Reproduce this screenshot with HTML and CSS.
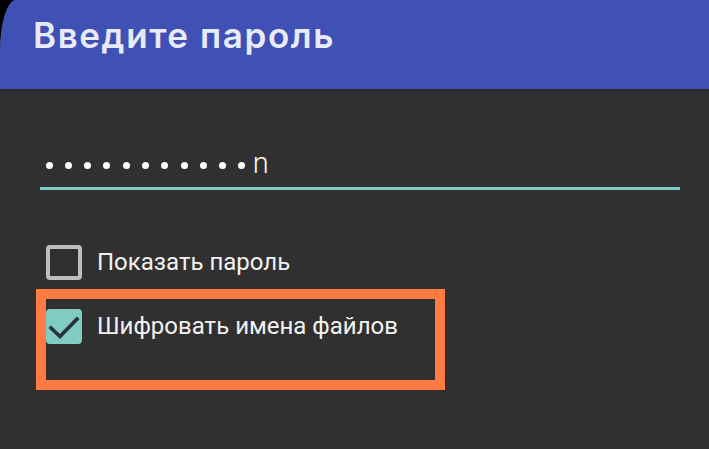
FILE: index.html
```html
<!DOCTYPE html>
<html lang="ru">
<head>
<meta charset="utf-8">
<title>Введите пароль</title>
<link rel="stylesheet" href="styles.css">
</head>
<body>
<div class="dialog">
  <header class="title-bar">
    <h1 class="title">Введите пароль</h1>
  </header>
  <div class="divider"></div>
  <main class="content">
    <div class="field">
      <span class="dot"></span><span class="dot"></span><span class="dot"></span><span class="dot"></span><span class="dot"></span><span class="dot"></span><span class="dot"></span><span class="dot"></span><span class="dot"></span><span class="dot"></span><span class="dot"></span><span class="last-char">n</span>
    </div>
    <div class="options">
      <label class="option">
        <span class="box"></span>
        <span class="label">Показать пароль</span>
      </label>
      <label class="option">
        <span class="box checked">
          <svg viewBox="0 0 36 36" width="36" height="36" class="check"><path d="M5 19 L14 27.5 L31 10" fill="none" stroke="#263238" stroke-width="3.6" stroke-linecap="square" stroke-linejoin="miter"/></svg>
        </span>
        <span class="label">Шифровать имена файлов</span>
      </label>
    </div>
  </main>
  <div class="highlight"></div>
</div>
</body>
</html>
```

FILE: styles.css
```css
html, body {
  margin: 0;
  padding: 0;
  background: #000;
}
body {
  width: 709px;
  height: 449px;
  overflow: hidden;
  font-family: Roboto, "Noto Sans", "Liberation Sans", sans-serif;
}
.dialog {
  position: relative;
  width: 709px;
  height: 449px;
  background: #303030;
  border-top-left-radius: 16px 52px;
  overflow: hidden;
}
.title-bar {
  height: 89px;
  background: #3f51b5;
  padding: 15px 0 0 33px;
  box-sizing: border-box;
}
.title {
  margin: 0;
  font-family: Inter, Roboto, sans-serif;
  font-size: 35px;
  line-height: 40px;
  font-weight: 600;
  letter-spacing: 1.6px;
  color: #e8eaf8;
}
.divider {
  height: 2px;
  background: #27292d;
}
.content {
  padding: 52px 29px 0 40px;
}
.field {
  height: 44px;
  display: flex;
  align-items: center;
  border-bottom: 3px solid #80cbc4;
  padding-left: 5.5px;
  gap: 12.3px;
}
.dot {
  width: 7px;
  height: 7px;
  border-radius: 50%;
  background: #ffffff;
  flex: none;
}
.last-char {
  font-size: 29px;
  line-height: 30px;
  color: #f4f4f4;
  font-weight: 300;
  margin-left: -5px;
  margin-bottom: 4px;
}
.options {
  margin-top: 40px;
  margin-left: 6px;
  display: flex;
  flex-direction: column;
}
.option {
  height: 64px;
  display: flex;
  align-items: center;
  gap: 15px;
}
.box {
  width: 36px;
  height: 35px;
  box-sizing: border-box;
  border: 4px solid #bdbdbd;
  border-radius: 4px;
  flex: none;
  position: relative;
}
.box.checked {
  border: none;
  background: #80cbc4;
}
.check {
  display: block;
}
.label {
  font-size: 24px;
  color: #f2f2f2;
  line-height: 28px;
}
.highlight {
  position: absolute;
  left: 36px;
  top: 289px;
  width: 409px;
  height: 101px;
  box-sizing: border-box;
  border: 10px solid #ff7b43;
}
```
